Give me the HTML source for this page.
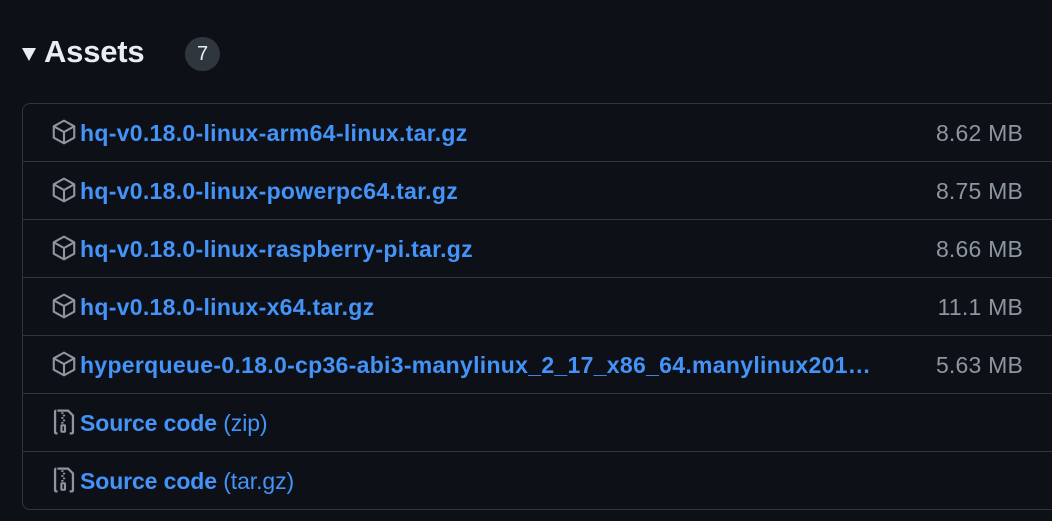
<!DOCTYPE html>
<html><head><style>
body{margin:0;background:#0d1117;width:1052px;height:521px;overflow:hidden;font-family:"Liberation Sans",sans-serif;}
.h{position:absolute;left:22px;top:30px;height:44px;display:flex;align-items:center;color:#e6edf3;}
.tri{width:0;height:0;border-left:7px solid transparent;border-right:7px solid transparent;border-top:13px solid #e6edf3;margin-right:8px;margin-top:4px}
.t{font-size:31px;font-weight:600;letter-spacing:-0.2px}
.b{position:absolute;left:185px;top:37px;width:35px;height:34px;border-radius:17px;background:#30363d;color:#e6edf3;font-size:20px;text-align:center;line-height:34px}
.box{position:absolute;left:22px;top:103px;width:1060px;height:405px;border:1px solid #30363d;border-radius:8px}
.r{height:57px;border-top:1px solid #30363d;position:relative}
.r:first-child{border-top:none}
.ic{position:absolute;left:28px;top:15px}
.l{position:absolute;left:57px;top:14px;line-height:30px;font-size:23px;color:#4493f8;white-space:nowrap;overflow:hidden;text-overflow:ellipsis;max-width:800px;letter-spacing:0.3px}
.l span{font-weight:400}
.s{position:absolute;right:60px;top:14px;line-height:30px;font-size:23px;color:#8d96a0;letter-spacing:0.2px}
.l span.bold,.bold{font-weight:600}
.src{letter-spacing:-0.1px}
</style></head><body>
<div class="h"><div class="tri"></div><span class="t">Assets</span></div>
<div class="b">7</div>
<div class="box">
<div class="r"><svg class="ic" width="26" height="26" viewBox="0 0 16 16"><path fill="none" stroke="#8d96a0" stroke-width="1.3" stroke-linejoin="round" d="M8 1L14.3 4.5V11.5L8 15L1.7 11.5V4.5Z M1.7 4.5L8 8L14.3 4.5 M8 8V15"/></svg><div class="l bold">hq-v0.18.0-linux-arm64-linux.tar.gz</div><div class="s">8.62 MB</div></div>
<div class="r"><svg class="ic" width="26" height="26" viewBox="0 0 16 16"><path fill="none" stroke="#8d96a0" stroke-width="1.3" stroke-linejoin="round" d="M8 1L14.3 4.5V11.5L8 15L1.7 11.5V4.5Z M1.7 4.5L8 8L14.3 4.5 M8 8V15"/></svg><div class="l bold">hq-v0.18.0-linux-powerpc64.tar.gz</div><div class="s">8.75 MB</div></div>
<div class="r"><svg class="ic" width="26" height="26" viewBox="0 0 16 16"><path fill="none" stroke="#8d96a0" stroke-width="1.3" stroke-linejoin="round" d="M8 1L14.3 4.5V11.5L8 15L1.7 11.5V4.5Z M1.7 4.5L8 8L14.3 4.5 M8 8V15"/></svg><div class="l bold">hq-v0.18.0-linux-raspberry-pi.tar.gz</div><div class="s">8.66 MB</div></div>
<div class="r"><svg class="ic" width="26" height="26" viewBox="0 0 16 16"><path fill="none" stroke="#8d96a0" stroke-width="1.3" stroke-linejoin="round" d="M8 1L14.3 4.5V11.5L8 15L1.7 11.5V4.5Z M1.7 4.5L8 8L14.3 4.5 M8 8V15"/></svg><div class="l bold">hq-v0.18.0-linux-x64.tar.gz</div><div class="s">11.1 MB</div></div>
<div class="r"><svg class="ic" width="26" height="26" viewBox="0 0 16 16"><path fill="none" stroke="#8d96a0" stroke-width="1.3" stroke-linejoin="round" d="M8 1L14.3 4.5V11.5L8 15L1.7 11.5V4.5Z M1.7 4.5L8 8L14.3 4.5 M8 8V15"/></svg><div class="l bold" style="max-width:800px">hyperqueue-0.18.0-cp36-abi3-manylinux_2_17_x86_64.manylinux2014_x86_64.whl</div><div class="s">5.63 MB</div></div>
<div class="r"><svg class="ic" width="26" height="26" viewBox="0 0 16 16"><path fill="none" stroke="#8d96a0" stroke-width="1.4" d="M4 1H10.5L13.5 4V14.2Q13.5 15 12.7 15H11.5 M4 15H3.3Q2.5 15 2.5 14.2V1.8Q2.5 1 3.3 1 M7 2V3 M8 3.5V4.5 M7 5V6 M8 6.5V7.5 M7 8V9"/><rect x="6.4" y="10" width="2.2" height="4" rx=".4" fill="none" stroke="#8d96a0" stroke-width="1.3"/></svg><div class="l src"><span class="bold">Source code</span> <span>(zip)</span></div></div>
<div class="r"><svg class="ic" width="26" height="26" viewBox="0 0 16 16"><path fill="none" stroke="#8d96a0" stroke-width="1.4" d="M4 1H10.5L13.5 4V14.2Q13.5 15 12.7 15H11.5 M4 15H3.3Q2.5 15 2.5 14.2V1.8Q2.5 1 3.3 1 M7 2V3 M8 3.5V4.5 M7 5V6 M8 6.5V7.5 M7 8V9"/><rect x="6.4" y="10" width="2.2" height="4" rx=".4" fill="none" stroke="#8d96a0" stroke-width="1.3"/></svg><div class="l src"><span class="bold">Source code</span> <span>(tar.gz)</span></div></div>
</div>
</body></html>
